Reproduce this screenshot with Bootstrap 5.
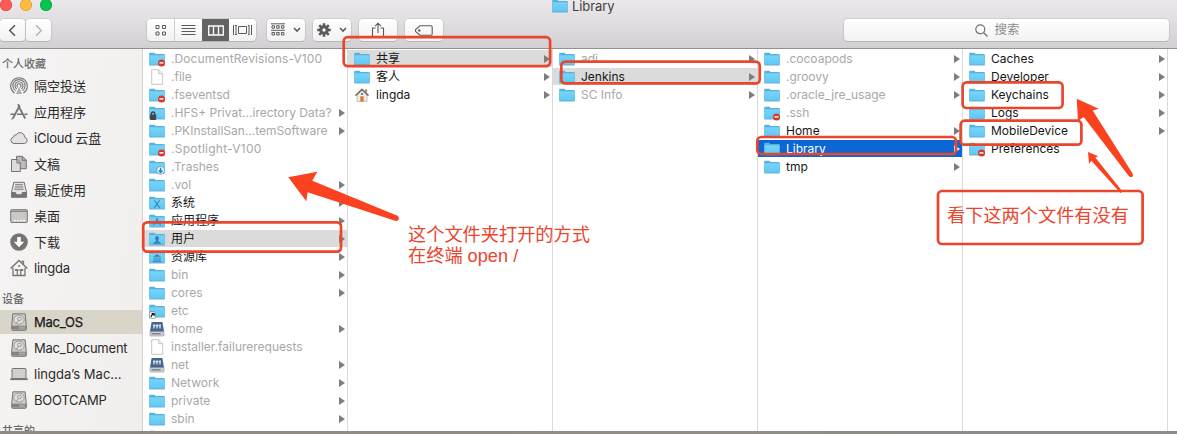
<!DOCTYPE html>
<html lang="zh-CN">
<head>
<meta charset="utf-8">
<title>Library</title>
<link rel="stylesheet" href="https://cdn.jsdelivr.net/npm/bootstrap@5.3.0/dist/css/bootstrap.min.css">
<style>
:root{--cjk:"Noto Sans CJK SC";--red:#ea452d}
body{font-family:Inter,var(--cjk),sans-serif;font-size:12px;line-height:18px;color:#161616;background:#fff;width:1177px;height:434px}
.finder{height:434px}
.titlebar{height:49px;background:linear-gradient(#ebe9eb,#d2d0d2);border-bottom:1px solid #929192}
.title-row{height:19px}
.lights{width:143px}
.light{width:12px;height:12px;border-radius:50%;margin-top:-1px}
.light.r{background:#fc5b57;box-shadow:inset 0 0 0 .7px #e2443f}
.light.y{background:#fdbc40;box-shadow:inset 0 0 0 .7px #dea034}
.light.g{background:#06c451;box-shadow:inset 0 0 0 .7px #12a73c}
.win-title{margin-left:409px;margin-top:-3px;font-size:13px;color:#414041;letter-spacing:-.1px}
.win-title svg{margin-right:4px}
.tool-row{height:22px}
.tb{height:22px;padding:0;border:0;border-radius:4px;background:linear-gradient(#fff,#f3f2f3);box-shadow:0 0 0 .6px #bdbbbd,0 1px 0 #b0aeb0;color:#5c5b5c;display:flex;align-items:center;justify-content:center;flex:none}
.views{width:109px;margin-left:96px;overflow:hidden}
.views span{height:22px;display:flex;align-items:center;justify-content:center}
.views .v1{width:28px;border-right:1px solid #cfcdcf}.views .v2{width:27px}.views .v3{width:27px;background:#656465;color:#fff}.views .v4{width:27px}
.search{width:325px;margin-left:401px;padding-right:18px;color:#8c8b8c;font-size:12.5px;gap:6px}
.body-row{height:382px}
.side{width:143px;flex:none;background:linear-gradient(100deg,#f5f4f4,#f1efed);border-right:1px solid #d2d1d0;overflow:hidden;font-size:13px;color:#2b2a29}
.side .head{font-size:11px;font-weight:500;color:#6a6968;padding-left:2px;height:25px;padding-top:6px}
.side .head.h2nd{height:28px;padding-top:8px}
.side .item{height:24px;margin-bottom:2px;padding-left:10px;display:flex;align-items:center;white-space:nowrap}
.side .item svg{width:18px;height:18px;margin-right:6px;flex:none;color:#757473}
.side .item.on{background:#dad5c9;color:#1b1a18;-webkit-text-stroke:.25px #1b1a18}
.side .item.lat{letter-spacing:-.22px}
.pane{width:205px;flex:none;border-right:1px solid #dadada;padding-top:1px;overflow:hidden}
.entry{height:17px;margin-bottom:1px;padding:0 2px 0 6px;display:flex;align-items:center;white-space:nowrap}
.entry svg{width:16px;height:16px;margin-right:6px;flex:none}
.entry.dim{color:#a8a8a8}
.entry.on{background:#dbdbdb}
.entry.sel{background:#0a67d3;color:#fff}
.entry.go::after{content:"";margin-left:auto;border-left:6.5px solid #7d7d7d;border-top:4px solid transparent;border-bottom:4px solid transparent}
.entry.sel.go::after{border-left-color:#fff}
.desk{height:3px;background:linear-gradient(90deg,#8f8b82,#928d86 60%,#8b8c8e)}
.marks{position:absolute;left:0;top:0;pointer-events:none}
.note{position:absolute;font-size:18.2px;line-height:20.5px;color:var(--red);white-space:nowrap;font-family:"Liberation Sans",Inter,var(--cjk),sans-serif;font-weight:400}
.note-a{left:408px;top:225px}
.note-b{left:947px;top:205.6px}
</style>
<script src="https://cdn.jsdelivr.net/npm/bootstrap@5.3.0/dist/js/bootstrap.bundle.min.js"></script>
</head>
<body class="overflow-hidden">
<svg width="0" height="0" class="position-absolute">
<defs>
<linearGradient id="fg" x1="0" y1="0" x2="0" y2="1"><stop offset="0" stop-color="#79d3f8"/><stop offset="1" stop-color="#5fc8f4"/></linearGradient>
<symbol id="folder" viewBox="0 0 16 16"><path d="M.2 13.600V2.600q0-.9.9-.9h4q.6 0 .9.5l.6.9h8.300q.9 0 .9.9v9.600z" fill="#56b3de"/><path d="M.6 4.300h14.800v9.400H.6z" fill="url(#fg)"/><path d="M.2 14h15.600" stroke="#479fca" stroke-width=".8"/></symbol>
<symbol id="deny" viewBox="0 0 16 16"><use href="#folder"/><circle cx="12.500" cy="11.900" r="3.500" fill="#d8372b"/><path d="M10.500 11.900h4" stroke="#fff" stroke-width="1.400"/></symbol>
<symbol id="lock" viewBox="0 0 16 16"><use href="#folder"/><path d="M2.400 10V8.700a1.700 1.700 0 0 1 3.400 0V10" fill="none" stroke="#3a4146" stroke-width="1.300"/><rect x="1" y="9.600" width="6.200" height="5.400" rx="1" fill="#41474b"/></symbol>
<symbol id="drop" viewBox="0 0 16 16"><use href="#folder"/><circle cx="11.600" cy="11.300" r="4" fill="#e9f5fb" stroke="#3c8fbd" stroke-width=".7"/><path d="M11.600 8.800v4.200M9.700 11.400l1.900 2 1.900-2" fill="none" stroke="#1f85bf" stroke-width="1.400"/></symbol>
<symbol id="fx" viewBox="0 0 16 16"><use href="#folder"/><path d="M5.300 5.300l5.400 7.400M10.700 5.300l-5.400 7.400" stroke="#3083b2" stroke-width="1.100"/></symbol>
<symbol id="fapp" viewBox="0 0 16 16"><use href="#folder"/><path d="M8.500 5l-4 7.500M7.500 5l4 7.500M4 10.300h8" fill="none" stroke="#3083b2" stroke-width="1"/></symbol>
<symbol id="fuser" viewBox="0 0 16 16"><use href="#folder"/><ellipse cx="8" cy="7.400" rx="1.900" ry="2.400" fill="#2f82b2"/><path d="M7.100 8.500h1.800v1.700q2.900.6 3 2.600H4.100q.1-2 3-2.600z" fill="#2f82b2"/></symbol>
<symbol id="flib" viewBox="0 0 16 16"><use href="#folder"/><path d="M4 7.800l4-2.500 4 2.500z" fill="#2f82b2"/><path d="M5.200 8.400v3.600M7.100 8.400v3.600M9 8.400v3.600M10.900 8.400v3.600M3.900 12.600h8.200" stroke="#2f82b2" stroke-width=".9"/></symbol>
<symbol id="alias" viewBox="0 0 16 16"><use href="#folder"/><rect x=".4" y="9" width="6" height="6.400" rx=".6" fill="#fff" stroke="#333" stroke-width=".4"/><path d="M1.900 14.200q.2-2.200 2.300-3M2.600 10.600h2.500v2.500" fill="none" stroke="#111" stroke-width="1.200"/></symbol>
<symbol id="page" viewBox="0 0 16 16"><path d="M2.700.7h7l4 4v10.600h-11z" fill="#fefefe" stroke="#b9b9b9" stroke-width=".8"/><path d="M9.700.7v4h4" fill="#f4f4f4" stroke="#b9b9b9" stroke-width=".8"/></symbol>
<symbol id="netvol" viewBox="0 0 16 16"><path d="M2.600.9h10.800l1.700 10H.9z" fill="#45678f"/><path d="M.9 10.500h14.200v3.800q0 .8-.8.8H1.700q-.8 0-.8-.8z" fill="#c9cdd1" stroke="#8a8f95" stroke-width=".5"/><path d="M2.700 12.800h9" stroke="#72777c" stroke-width="1.200"/><path d="M5 3.200v4.400M8 3.200v4.400M11 3.200v4.400" stroke="#fff" stroke-width="1.100"/><path d="M4 4.700h8" stroke="#dfe9f3" stroke-width=".9"/></symbol>
<symbol id="home" viewBox="0 0 16 16"><path d="M3 8l5-4.800L13 8v6.500H3z" fill="#efece6" stroke="#a9a298" stroke-width=".6"/><path d="M1.500 8.600L8 2.400l6.500 6.200" fill="none" stroke="#7c6a5c" stroke-width="1.500"/><path d="M11.200 2.500h1.700v3l-1.700-1.600z" fill="#9a5746"/><rect x="6.300" y="9.300" width="3.400" height="5.200" fill="#e0782f"/><rect x="7" y="6" width="2" height="2" fill="#4b83b8"/></symbol>
<symbol id="s-air" viewBox="0 0 18 18"><g fill="none" stroke="currentColor" stroke-width="1.100"><path d="M4.700 16.100a8.300 8.300 0 1 1 8.600 0"/><path d="M5.600 13.800a6.100 6.100 0 1 1 6.800 0"/><path d="M6.700 12a4 4 0 1 1 4.600 0"/><path d="M7.800 10.400a2 2 0 1 1 2.400 0"/></g><path d="M9 10l3 7H6z" fill="currentColor" opacity=".55"/></symbol>
<symbol id="s-app" viewBox="0 0 18 18"><g fill="none" stroke="currentColor" stroke-width="1.800"><path d="M9.800 2.500L2.800 15.500M8.200 2.500l7 13"/><path d="M.4 11.300h4.200M7 11.300h5M14.500 11.300h3" stroke-width="1.500"/></g><path d="M7.400 1.500h1.700M1.800 16.800l.6-2" stroke="currentColor"/></symbol>
<symbol id="s-cloud" viewBox="0 0 18 18"><path d="M4 14.500a3.300 3.300 0 0 1-.5-6.500 2.400 2.400 0 0 1 2.700-2.200 4.600 4.600 0 0 1 8.500 2.400 3.200 3.200 0 0 1-.5 6.300z" fill="#e4e3e2" stroke="currentColor" stroke-width="1"/></symbol>
<symbol id="s-doc" viewBox="0 0 18 18"><path d="M6.500 1.300h6l3.800 3.800v8.600H6.500z" fill="#bdbcbb" stroke="currentColor"/><path d="M12.300 1.300v4h4" fill="none" stroke="currentColor"/><path d="M1.500 4.500h5.600l3.200 3.200v8.800H1.500z" fill="#dddcdb" stroke="currentColor"/><path d="M6.900 4.500v3.500h3.400" fill="none" stroke="currentColor"/></symbol>
<symbol id="s-rec" viewBox="0 0 18 18"><path d="M3.800 1.300h10.400l2.300 10v5H1.500v-5z" fill="#e5e4e3" stroke="currentColor"/><path d="M5.200 3.800h7.600M4.800 6h8.400M4.400 8.200h9.200" stroke="currentColor" stroke-width="1.100"/><path d="M1.500 11h4.200q.3 2.200 1.600 2.200h3.400q1.300 0 1.600-2.200h4.200v5.300h-15z" fill="currentColor"/></symbol>
<symbol id="s-desk" viewBox="0 0 18 18"><rect x=".7" y="2.700" width="16.600" height="12.800" rx=".8" fill="#c9c8c7" stroke="currentColor"/><path d="M1 4.300h16" stroke="currentColor"/><path d="M4 13.700h2M7 13.700h2M10 13.700h2M13 13.700h2" stroke="#f1f0ef" stroke-width="1.800"/></symbol>
<symbol id="s-down" viewBox="0 0 18 18"><circle cx="9" cy="9" r="8.800" fill="currentColor"/><path d="M7.200 4h3.600v4.700h3.400L9 14.200 3.800 8.700h3.400z" fill="#fff"/></symbol>
<symbol id="s-home" viewBox="0 0 18 18"><path d="M.6 9.500L9 1.500l8.400 8" fill="none" stroke="currentColor" stroke-width="1.400"/><path d="M3 8.800v7.700h12V8.800M13.500 5.600V2.300h-2" fill="none" stroke="currentColor" stroke-width="1.300"/><path d="M5 11h2.500M10.700 11h2.500" stroke="currentColor" stroke-width="2"/><path d="M7.300 16.500V11h3.400v5.500" fill="none" stroke="currentColor" stroke-width="1.200"/><circle cx="9" cy="7" r="1" fill="currentColor"/></symbol>
<symbol id="s-disk" viewBox="0 0 18 18"><path d="M2.900.8h12.200l1.200 11.700v4q0 .8-.8.8h-13q-.8 0-.8-.8v-4z" fill="#cfcecc" stroke="currentColor" stroke-width="1"/><path d="M1.900 12.600h14.200v4H1.900z" fill="#868482"/><ellipse cx="9" cy="6.600" rx="5.200" ry="4.500" fill="#e2e0de" stroke="#8d8b89" stroke-width=".8"/><ellipse cx="9.500" cy="5.900" rx="2" ry="1.700" fill="none" stroke="#8d8b89" stroke-width=".8"/><path d="M9 7L6 10.500" stroke="#8d8b89" stroke-width=".9"/><path d="M12 13.500v2.300M14 13.500v2.300M10 13.500v2.300" stroke="#dedcd9" stroke-width=".8"/></symbol>
<symbol id="s-lap" viewBox="0 0 18 18"><rect x="2" y="3.500" width="14" height="10" rx=".8" fill="#d0cfce" stroke="currentColor"/><path d="M.2 14.200h17.600" stroke="currentColor" stroke-width="1.800"/></symbol>
</defs>
</svg>

<main class="finder d-flex flex-column">
<header class="titlebar flex-shrink-0">
  <div class="title-row d-flex align-items-start">
    <div class="lights d-flex gap-2"><i class="light r"></i><i class="light y"></i><i class="light g"></i></div>
    <div class="win-title d-flex align-items-center"><svg width="16" height="16"><use href="#folder"/></svg>Library</div>
  </div>
  <div class="tool-row d-flex">
    <div class="tb" style="width:25px"><svg width="9" height="13" viewBox="0 0 9 13" fill="none" stroke="#555" stroke-width="1.500"><path d="M7 1.200L1.700 6.500 7 11.800"/></svg></div>
    <div class="tb" style="width:25px;margin-left:1px"><svg width="9" height="13" viewBox="0 0 9 13" fill="none" stroke="#b5b4b5" stroke-width="1.500"><path d="M2 1.200l5.300 5.300L2 11.800"/></svg></div>
    <div class="tb views">
      <span class="v1"><svg width="12" height="12" viewBox="0 0 12 12" fill="none" stroke="currentColor"><path d="M1 1.500h3v3H1zM7.500 1.500h3v3h-3zM1 8h3v3H1zM7.500 8h3v3h-3z"/></svg></span>
      <span class="v2"><svg width="15" height="12" viewBox="0 0 15 12" stroke="currentColor"><path d="M.5 1.500h14M.5 4.500h14M.5 7.500h14M.5 10.500h14"/></svg></span>
      <span class="v3"><svg width="16" height="11" viewBox="0 0 16 11" fill="none" stroke="currentColor" stroke-width="1.300"><path d="M.7 1h14.600v9H.7zM5.500 1v9M10.500 1v9"/></svg></span>
      <span class="v4"><svg width="19" height="12" viewBox="0 0 19 12" fill="none" stroke="currentColor"><path d="M.5 1v10M3 1v10M2 1.500h2M2 10.500h2M5.500 2.500h8v7h-8zM16 1v10M18.500 1v10M15 1.500h1M15 10.500h1"/></svg></span>
    </div>
    <div class="tb gap-2" style="width:38px;margin-left:11px"><svg width="14" height="14" viewBox="0 0 14 14" fill="none" stroke="currentColor"><path d="M0 .8h14M0 7.300h14M1 2.700h2.500v2.500H1zM5.700 2.700h2.500v2.500H5.700zM10.400 2.700h2.500v2.500h-2.500zM1 9.500h2.500V12H1zM5.700 9.500h2.500V12H5.700zM10.400 9.500h2.500V12h-2.500z"/></svg><svg width="8" height="6" viewBox="0 0 8 6" fill="none" stroke="currentColor" stroke-width="1.600"><path d="M1 1l3 3 3-3"/></svg></div>
    <div class="tb gap-2" style="width:38px;margin-left:8px"><svg width="14" height="14" viewBox="-7 -7 14 14"><g stroke="currentColor" stroke-width="2.600"><path d="M0-6.800V6.800M-6.800 0H6.800M-4.800-4.800l9.600 9.600M4.800-4.800l-9.600 9.600"/></g><circle r="4.800" fill="currentColor"/><circle r="1.700" fill="#f8f8f8"/></svg><svg width="8" height="6" viewBox="0 0 8 6" fill="none" stroke="currentColor" stroke-width="1.600"><path d="M1 1l3 3 3-3"/></svg></div>
    <div class="tb" style="width:38px;margin-left:8px"><svg width="14" height="16" viewBox="0 0 14 16" fill="none" stroke="currentColor" stroke-width="1.100"><path d="M4.500 6H1.500v8.500h11V6h-3M7 11V1.200M4 4.200l3-3 3 3"/></svg></div>
    <div class="tb" style="width:38px;margin-left:8px"><svg width="18" height="11" viewBox="0 0 18 11" fill="none" stroke="currentColor" stroke-width="1.100"><path d="M5 .8h10.800q1.400 0 1.400 1.400v6.600q0 1.400-1.400 1.400H5L.8 6.700q-.7-1.200 0-2.400z"/><circle cx="4.300" cy="5.500" r=".7"/></svg></div>
    <div class="tb search"><svg width="13" height="13" viewBox="0 0 13 13" fill="none" stroke="#737273" stroke-width="1.200"><circle cx="5.300" cy="5.300" r="4.500"/><path d="M8.500 8.500l4 4"/></svg>搜索</div>
  </div>
</header>

<section class="body-row d-flex overflow-hidden flex-shrink-0">
  <nav class="side">
    <div class="head">个人收藏</div>
    <div class="item"><svg><use href="#s-air"/></svg>隔空投送</div>
    <div class="item"><svg><use href="#s-app"/></svg>应用程序</div>
    <div class="item lat"><svg><use href="#s-cloud"/></svg>iCloud 云盘</div>
    <div class="item"><svg><use href="#s-doc"/></svg>文稿</div>
    <div class="item"><svg><use href="#s-rec"/></svg>最近使用</div>
    <div class="item"><svg><use href="#s-desk"/></svg>桌面</div>
    <div class="item"><svg><use href="#s-down"/></svg>下载</div>
    <div class="item lat"><svg><use href="#s-home"/></svg>lingda</div>
    <div class="head h2nd">设备</div>
    <div class="item lat on"><svg><use href="#s-disk"/></svg>Mac_OS</div>
    <div class="item lat"><svg><use href="#s-disk"/></svg>Mac_Document</div>
    <div class="item"><svg><use href="#s-lap"/></svg>lingda’s Mac...</div>
    <div class="item lat"><svg><use href="#s-disk"/></svg>BOOTCAMP</div>
    <div class="head h2nd">共享的</div>
  </nav>

  <div class="pane">
    <div class="entry dim"><svg><use href="#deny"/></svg><span style="letter-spacing:.1px">.DocumentRevisions-V100</span></div>
    <div class="entry dim"><svg><use href="#page"/></svg>.file</div>
    <div class="entry dim"><svg><use href="#deny"/></svg>.fseventsd</div>
    <div class="entry dim go"><svg><use href="#lock"/></svg>.HFS+ Privat...irectory Data?</div>
    <div class="entry dim go"><svg><use href="#folder"/></svg>.PKInstallSan...temSoftware</div>
    <div class="entry dim"><svg><use href="#deny"/></svg><span style="letter-spacing:.25px">.Spotlight-V100</span></div>
    <div class="entry dim"><svg><use href="#drop"/></svg>.Trashes</div>
    <div class="entry dim go"><svg><use href="#folder"/></svg>.vol</div>
    <div class="entry go"><svg><use href="#fx"/></svg>系统</div>
    <div class="entry go"><svg><use href="#fapp"/></svg>应用程序</div>
    <div class="entry on go"><svg><use href="#fuser"/></svg>用户</div>
    <div class="entry go"><svg><use href="#flib"/></svg>资源库</div>
    <div class="entry dim go"><svg><use href="#folder"/></svg>bin</div>
    <div class="entry dim go"><svg><use href="#folder"/></svg>cores</div>
    <div class="entry dim"><svg><use href="#alias"/></svg>etc</div>
    <div class="entry dim go"><svg><use href="#netvol"/></svg>home</div>
    <div class="entry dim"><svg><use href="#page"/></svg>installer.failurerequests</div>
    <div class="entry dim go"><svg><use href="#netvol"/></svg>net</div>
    <div class="entry dim go"><svg><use href="#folder"/></svg>Network</div>
    <div class="entry dim go"><svg><use href="#folder"/></svg>private</div>
    <div class="entry dim go"><svg><use href="#folder"/></svg>sbin</div>
    <div class="entry dim"><svg><use href="#folder"/></svg></div>
  </div>

  <div class="pane">
    <div class="entry on go"><svg><use href="#folder"/></svg>共享</div>
    <div class="entry go"><svg><use href="#folder"/></svg>客人</div>
    <div class="entry go"><svg><use href="#home"/></svg>lingda</div>
  </div>

  <div class="pane">
    <div class="entry dim go"><svg><use href="#folder"/></svg>adi</div>
    <div class="entry on go"><svg><use href="#folder"/></svg>Jenkins</div>
    <div class="entry dim go"><svg><use href="#folder"/></svg>SC Info</div>
  </div>

  <div class="pane">
    <div class="entry dim go"><svg><use href="#folder"/></svg>.cocoapods</div>
    <div class="entry dim go"><svg><use href="#folder"/></svg>.groovy</div>
    <div class="entry dim go"><svg><use href="#folder"/></svg>.oracle_jre_usage</div>
    <div class="entry dim"><svg><use href="#deny"/></svg>.ssh</div>
    <div class="entry go"><svg><use href="#folder"/></svg>Home</div>
    <div class="entry sel go"><svg><use href="#folder"/></svg>Library</div>
    <div class="entry go"><svg><use href="#folder"/></svg>tmp</div>
  </div>

  <div class="pane">
    <div class="entry go"><svg><use href="#folder"/></svg>Caches</div>
    <div class="entry go"><svg><use href="#folder"/></svg>Developer</div>
    <div class="entry go"><svg><use href="#folder"/></svg>Keychains</div>
    <div class="entry go"><svg><use href="#folder"/></svg>Logs</div>
    <div class="entry go"><svg><use href="#folder"/></svg>MobileDevice</div>
    <div class="entry"><svg><use href="#deny"/></svg>Preferences</div>
  </div>
</section>
<div class="desk"></div>
</main>

<!-- hand-drawn annotations over the window -->
<svg class="marks" width="1177" height="434" viewBox="0 0 1177 434">
  <g fill="none" stroke="#ea452d" stroke-width="2.700">
    <rect x="343.700" y="37.200" width="206.400" height="28.900" rx="4"/>
    <rect x="561.300" y="61.600" width="198.400" height="21.800" rx="4"/>
    <rect x="143.200" y="222.300" width="197.800" height="29.300" rx="4"/>
    <rect x="757.300" y="137" width="198.700" height="17" rx="4"/>
    <rect x="962.600" y="82.400" width="100" height="25.600" rx="4"/>
    <rect x="960.600" y="120.700" width="120.800" height="24" rx="4"/>
    <rect x="938" y="191" width="204.600" height="53" rx="4"/>
  </g>
  <g fill="#fb4220">
    <path d="M288.300 177.300L317.300 171.700 312.300 180.700 396.800 215.400Q399.600 216.800 398.800 219.200 397.800 221.400 395 220.800L307.700 192.300 306.300 201.300z"/>
    <path d="M1076.700 98.700L1098.700 108.700 1092.700 110.500 1132.600 173.500Q1133.600 175.800 1131.800 177 1130 177.600 1128.600 175.800L1083.700 117 1078 121z"/>
    <path d="M1088 152L1098.300 156.300 1095.300 157.500 1122.500 191.500 1120.500 193 1091.300 160.700 1089 164z"/>
  </g>
</svg>
<div class="note note-a">这个文件夹打开的方式<br>在终端 open /</div>
<div class="note note-b">看下这两个文件有没有</div>
</body>
</html>
